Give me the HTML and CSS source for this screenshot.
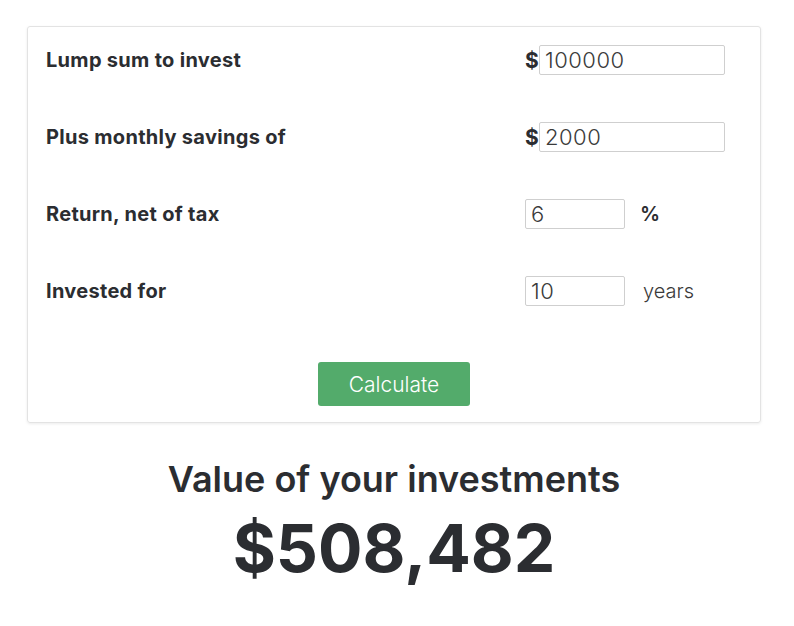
FILE: index.html
```html
<!DOCTYPE html>
<html lang="en">
<head>
    <meta charset="UTF-8">
    <meta name="viewport" content="width=device-width, initial-scale=1.0">
    <title>Investment Calculator</title>
    <link rel="stylesheet" href="styles.css">
</head>
<body>
    <form class="calc-card" id="calcForm">
        <div class="calc-row">
            <label for="lump">Lump sum to invest</label>
            <div class="field">
                <span class="currency">$</span>
                <input type="text" id="lump" class="wide-input" value="100000">
            </div>
        </div>
        <div class="calc-row">
            <label for="monthly">Plus monthly savings of</label>
            <div class="field">
                <span class="currency">$</span>
                <input type="text" id="monthly" class="wide-input" value="2000">
            </div>
        </div>
        <div class="calc-row">
            <label for="rate">Return, net of tax</label>
            <div class="field">
                <input type="text" id="rate" class="short-input" value="6">
                <span class="unit unit-bold">%</span>
            </div>
        </div>
        <div class="calc-row">
            <label for="years">Invested for</label>
            <div class="field">
                <input type="text" id="years" class="short-input" value="10">
                <span class="unit">years</span>
            </div>
        </div>
        <div class="button-container">
            <button type="button" class="calc-btn">Calculate</button>
        </div>
    </form>

    <div class="result">
        <h2 class="result-title">Value of your investments</h2>
        <p class="result-value" id="result">$508,482</p>
    </div>
</body>
</html>
```
FILE: styles.css
```css
body {
    margin: 0;
    padding: 26px 33px 0 27px;
    background-color: #fff;
    font-family: Inter, "Open Sans", sans-serif;
    color: #2b2d31;
}

.calc-card {
    border: 1px solid #e3e3e3;
    border-radius: 3px;
    box-shadow: 0 1px 3px rgba(0, 0, 0, 0.08);
    padding: 18px 18px 16px 18px;
}

.calc-row {
    display: grid;
    grid-template-columns: 479px 1fr;
    align-items: center;
    height: 30px;
    margin-bottom: 47px;
}

.calc-row label {
    font-size: 20px;
    font-weight: 700;
    letter-spacing: 0.3px;
    color: #2b2d31;
}

.field {
    display: flex;
    align-items: center;
}

.currency {
    font-size: 21px;
    font-weight: 700;
    width: 14px;
}

input[type="text"] {
    height: 30px;
    box-sizing: border-box;
    border: 1px solid #cfcfcf;
    border-radius: 2px;
    padding: 0 5px;
    font-family: Inter, "Open Sans", sans-serif;
    font-size: 22px;
    font-weight: 300;
    letter-spacing: 0.5px;
    color: #3a3a3a;
}

.wide-input {
    width: 186px;
}

.short-input {
    width: 100px;
}

.unit {
    margin-left: 18px;
    font-size: 20px;
    font-weight: 300;
    color: #3a3a3a;
}

.unit-bold {
    margin-left: 15px;
    font-weight: 600;
    color: #2b2d31;
}

.button-container {
    display: flex;
    justify-content: center;
    margin-top: 56px;
}

.calc-btn {
    width: 152px;
    height: 44px;
    border: none;
    border-radius: 3px;
    background-color: #53ab6b;
    color: #fff;
    font-family: Inter, "Open Sans", sans-serif;
    font-size: 21px;
    font-weight: 300;
    cursor: pointer;
}

.result {
    text-align: center;
}

.result-title {
    margin: 34px 0 0 0;
    font-size: 36px;
    font-weight: 600;
    line-height: 44px;
}

.result-value {
    margin: 7px 0 0 0;
    font-size: 66px;
    font-weight: 700;
    line-height: 80px;
}
```
